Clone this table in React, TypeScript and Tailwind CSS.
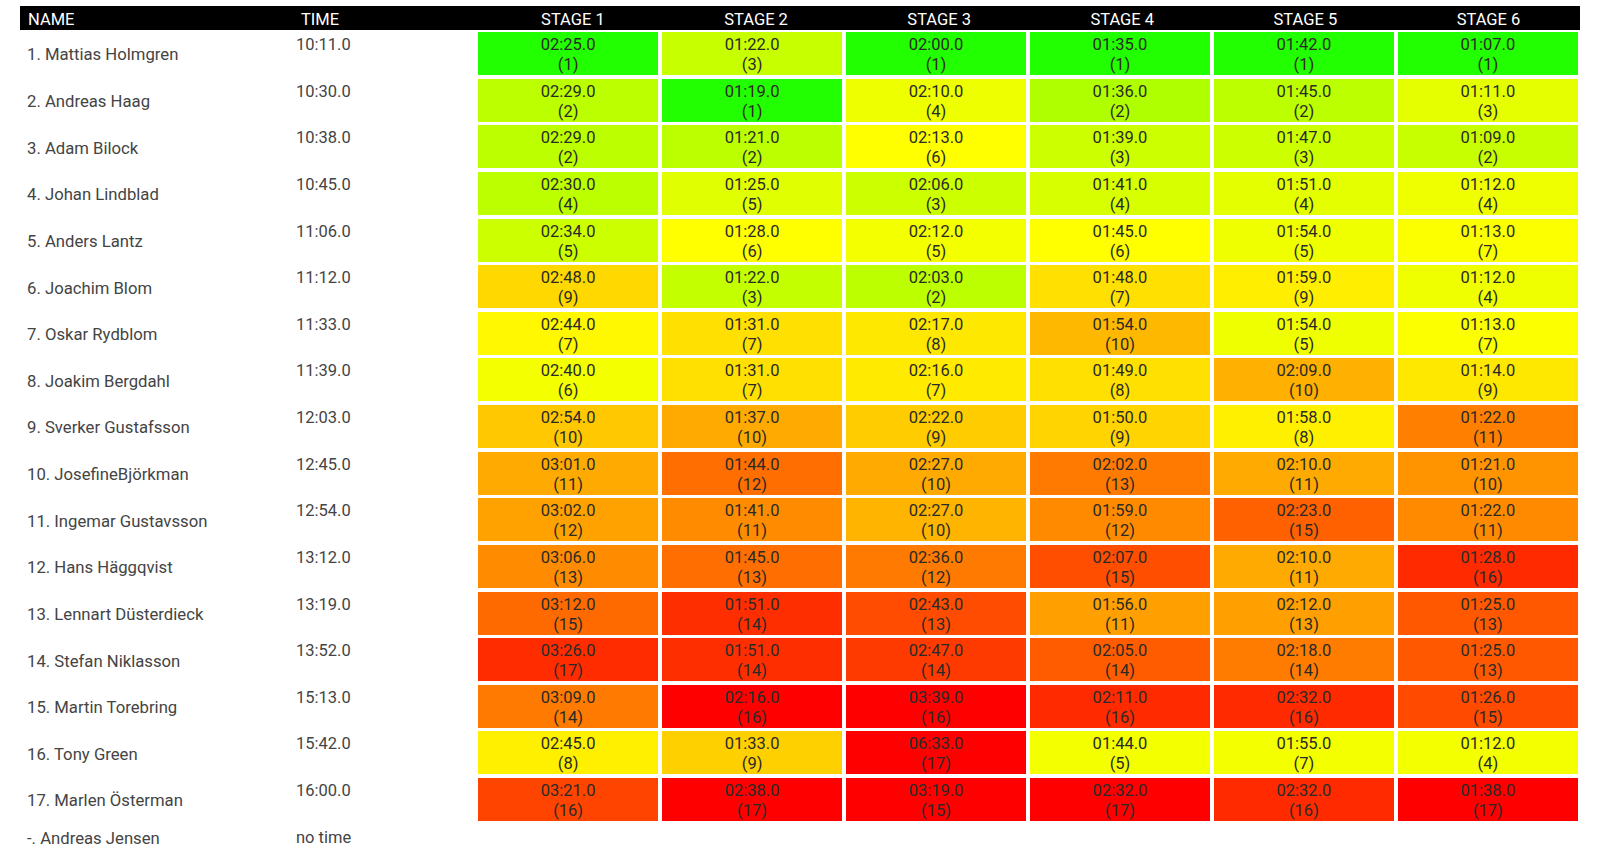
type Split = [string, number, string];

type Row = {
  name: string;
  time: string;
  splits: Split[];
};

const rows: Row[] = [
  {
    name: "1. Mattias Holmgren",
    time: "10:11.0",
    splits: [
      ["02:25.0", 1, "#22ff00"],
      ["01:22.0", 3, "#c8ff00"],
      ["02:00.0", 1, "#22ff00"],
      ["01:35.0", 1, "#22ff00"],
      ["01:42.0", 1, "#22ff00"],
      ["01:07.0", 1, "#22ff00"],
    ],
  },
  {
    name: "2. Andreas Haag",
    time: "10:30.0",
    splits: [
      ["02:29.0", 2, "#bbff00"],
      ["01:19.0", 1, "#22ff00"],
      ["02:10.0", 4, "#eeff00"],
      ["01:36.0", 2, "#b0ff00"],
      ["01:45.0", 2, "#bbff00"],
      ["01:11.0", 3, "#e6ff00"],
    ],
  },
  {
    name: "3. Adam Bilock",
    time: "10:38.0",
    splits: [
      ["02:29.0", 2, "#bbff00"],
      ["01:21.0", 2, "#bbff00"],
      ["02:13.0", 6, "#ffff00"],
      ["01:39.0", 3, "#ccff00"],
      ["01:47.0", 3, "#ccff00"],
      ["01:09.0", 2, "#c8ff00"],
    ],
  },
  {
    name: "4. Johan Lindblad",
    time: "10:45.0",
    splits: [
      ["02:30.0", 4, "#bbff00"],
      ["01:25.0", 5, "#e0ff00"],
      ["02:06.0", 3, "#ccff00"],
      ["01:41.0", 4, "#d8ff00"],
      ["01:51.0", 4, "#e4ff00"],
      ["01:12.0", 4, "#f0ff00"],
    ],
  },
  {
    name: "5. Anders Lantz",
    time: "11:06.0",
    splits: [
      ["02:34.0", 5, "#ccff00"],
      ["01:28.0", 6, "#ffff00"],
      ["02:12.0", 5, "#f4ff00"],
      ["01:45.0", 6, "#ffff00"],
      ["01:54.0", 5, "#f0ff00"],
      ["01:13.0", 7, "#fcff00"],
    ],
  },
  {
    name: "6. Joachim Blom",
    time: "11:12.0",
    splits: [
      ["02:48.0", 9, "#ffd800"],
      ["01:22.0", 3, "#c4ff00"],
      ["02:03.0", 2, "#bbff00"],
      ["01:48.0", 7, "#ffe000"],
      ["01:59.0", 9, "#ffee00"],
      ["01:12.0", 4, "#f0ff00"],
    ],
  },
  {
    name: "7. Oskar Rydblom",
    time: "11:33.0",
    splits: [
      ["02:44.0", 7, "#fff800"],
      ["01:31.0", 7, "#ffe000"],
      ["02:17.0", 8, "#ffe800"],
      ["01:54.0", 10, "#ffb800"],
      ["01:54.0", 5, "#f0ff00"],
      ["01:13.0", 7, "#fcff00"],
    ],
  },
  {
    name: "8. Joakim Bergdahl",
    time: "11:39.0",
    splits: [
      ["02:40.0", 6, "#f4ff00"],
      ["01:31.0", 7, "#ffe000"],
      ["02:16.0", 7, "#ffea00"],
      ["01:49.0", 8, "#ffe000"],
      ["02:09.0", 10, "#ffb000"],
      ["01:14.0", 9, "#ffe800"],
    ],
  },
  {
    name: "9. Sverker Gustafsson",
    time: "12:03.0",
    splits: [
      ["02:54.0", 10, "#ffc800"],
      ["01:37.0", 10, "#ffaa00"],
      ["02:22.0", 9, "#ffcc00"],
      ["01:50.0", 9, "#ffd400"],
      ["01:58.0", 8, "#fff000"],
      ["01:22.0", 11, "#ff8000"],
    ],
  },
  {
    name: "10. JosefineBjörkman",
    time: "12:45.0",
    splits: [
      ["03:01.0", 11, "#ffaa00"],
      ["01:44.0", 12, "#ff6e00"],
      ["02:27.0", 10, "#ffaa00"],
      ["02:02.0", 13, "#ff7a00"],
      ["02:10.0", 11, "#ffaa00"],
      ["01:21.0", 10, "#ff9400"],
    ],
  },
  {
    name: "11. Ingemar Gustavsson",
    time: "12:54.0",
    splits: [
      ["03:02.0", 12, "#ffa200"],
      ["01:41.0", 11, "#ff8c00"],
      ["02:27.0", 10, "#ffb400"],
      ["01:59.0", 12, "#ff8a00"],
      ["02:23.0", 15, "#ff6000"],
      ["01:22.0", 11, "#ff8a00"],
    ],
  },
  {
    name: "12. Hans Häggqvist",
    time: "13:12.0",
    splits: [
      ["03:06.0", 13, "#ff8c00"],
      ["01:45.0", 13, "#ff6e00"],
      ["02:36.0", 12, "#ff7a00"],
      ["02:07.0", 15, "#ff4e00"],
      ["02:10.0", 11, "#ffaa00"],
      ["01:28.0", 16, "#ff2a00"],
    ],
  },
  {
    name: "13. Lennart Düsterdieck",
    time: "13:19.0",
    splits: [
      ["03:12.0", 15, "#ff6a00"],
      ["01:51.0", 14, "#ff2e00"],
      ["02:43.0", 13, "#ff4c00"],
      ["01:56.0", 11, "#ffa000"],
      ["02:12.0", 13, "#ffa000"],
      ["01:25.0", 13, "#ff5800"],
    ],
  },
  {
    name: "14. Stefan Niklasson",
    time: "13:52.0",
    splits: [
      ["03:26.0", 17, "#ff2c00"],
      ["01:51.0", 14, "#ff2e00"],
      ["02:47.0", 14, "#ff3a00"],
      ["02:05.0", 14, "#ff5c00"],
      ["02:18.0", 14, "#ff7c00"],
      ["01:25.0", 13, "#ff5800"],
    ],
  },
  {
    name: "15. Martin Torebring",
    time: "15:13.0",
    splits: [
      ["03:09.0", 14, "#ff7a00"],
      ["02:16.0", 16, "#ff0000"],
      ["03:39.0", 16, "#ff0000"],
      ["02:11.0", 16, "#ff2a00"],
      ["02:32.0", 16, "#ff2a00"],
      ["01:26.0", 15, "#ff4a00"],
    ],
  },
  {
    name: "16. Tony Green",
    time: "15:42.0",
    splits: [
      ["02:45.0", 8, "#fff000"],
      ["01:33.0", 9, "#ffd000"],
      ["06:33.0", 17, "#ff0000"],
      ["01:44.0", 5, "#f4ff00"],
      ["01:55.0", 7, "#f4ff00"],
      ["01:12.0", 4, "#f4ff00"],
    ],
  },
  {
    name: "17. Marlen Österman",
    time: "16:00.0",
    splits: [
      ["03:21.0", 16, "#ff4400"],
      ["02:38.0", 17, "#ff0000"],
      ["03:19.0", 15, "#ff0000"],
      ["02:32.0", 17, "#ff0000"],
      ["02:32.0", 16, "#ff2a00"],
      ["01:38.0", 17, "#ff0000"],
    ],
  },
];

const stages = [1, 2, 3, 4, 5, 6];

export default function App() {
  return (
    <div className="min-h-screen bg-white font-['Roboto','Liberation_Sans',sans-serif]">
      <div className="px-[20px] pt-[6px]">
        {/* header */}
        <div className="flex h-[24px] bg-black text-[16.5px] leading-[27px] text-white">
          <div className="w-[281px] pl-[8px]">NAME</div>
          <div className="w-[180.4px]">TIME</div>
          {stages.map((s) => (
            <div key={s} className="flex-1 text-center">
              STAGE {s}
            </div>
          ))}
        </div>

        <div className="mt-[2px] flex flex-col gap-[3.625px]">
          {rows.map((r) => (
            <div key={r.name} className="flex h-[43px]">
              <div className="flex w-[276px] items-center pl-[7px] pt-[3px] text-[16.7px] text-[#444]">
                {r.name}
              </div>
              <div className="w-[182px] pt-[2px] text-[16.5px] leading-[22px] text-[#444]">
                {r.time}
              </div>
              <div className="grid w-[1100px] grid-cols-6 gap-x-[3.7px]">
                {r.splits.map(([t, rank, color], i) => (
                  <div
                    key={i}
                    className="h-[43px] pt-[3px] text-center text-[16.5px] leading-[20px] text-[#2a2a2a]"
                    style={{ backgroundColor: color }}
                  >
                    <div>{t}</div>
                    <div>({rank})</div>
                  </div>
                ))}
              </div>
            </div>
          ))}

          <div className="flex h-[24px] items-center pt-[4px] text-[16.5px] text-[#444]">
            <div className="w-[276px] pl-[7px] text-[16.7px]">-. Andreas Jensen</div>
            <div className="w-[182px]">no time</div>
          </div>
        </div>
      </div>
    </div>
  );
}
